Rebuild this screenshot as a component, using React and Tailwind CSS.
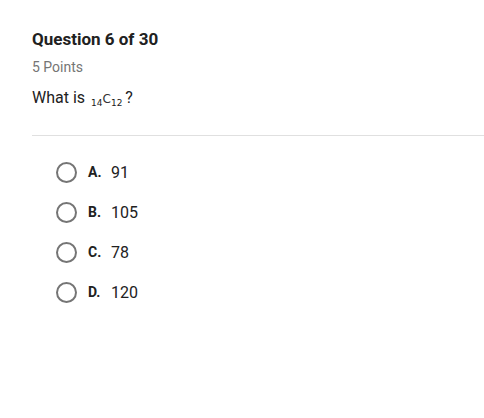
import React from "react";

const options = [
  { letter: "A.", value: "91" },
  { letter: "B.", value: "105" },
  { letter: "C.", value: "78" },
  { letter: "D.", value: "120" },
];

export default function App() {
  return (
    <div
      className="w-[484px] h-[418px] bg-white text-[#212121]"
      style={{ fontFamily: "Roboto, 'Liberation Sans', sans-serif" }}
    >
      <div className="pl-8 pt-[29px]">
        <h1 className="text-[17px] leading-[20px] font-bold">Question 6 of 30</h1>
        <p className="mt-[10px] text-[14px] leading-[16px] text-[#757575]">5 Points</p>
        <p className="mt-[13px] text-[16px] leading-[20px] flex items-baseline">
          <span>What is</span>
          <span className="ml-[6px] inline-flex items-baseline font-['DejaVu_Sans',sans-serif]">
            <span className="text-[9px] relative top-[3px]">14</span>
            <span className="text-[12px] text-[#333]">C</span>
            <span className="text-[9px] relative top-[3px]">12</span>
          </span>
          <span className="ml-[3px]">?</span>
        </p>
        <div className="mt-[25px] border-t border-[#e0e0e0]" />
      </div>
      <div className="pl-[56px] pt-[26px] flex flex-col gap-[19px]">
        {options.map((o) => (
          <div key={o.letter} className="flex items-center h-[21px]">
            <span className="w-[21px] h-[21px] rounded-full border-2 border-[#757575]" />
            <span className="ml-[11px] w-[23px] text-[14px] font-bold">{o.letter}</span>
            <span className="text-[16px]">{o.value}</span>
          </div>
        ))}
      </div>
    </div>
  );
}
